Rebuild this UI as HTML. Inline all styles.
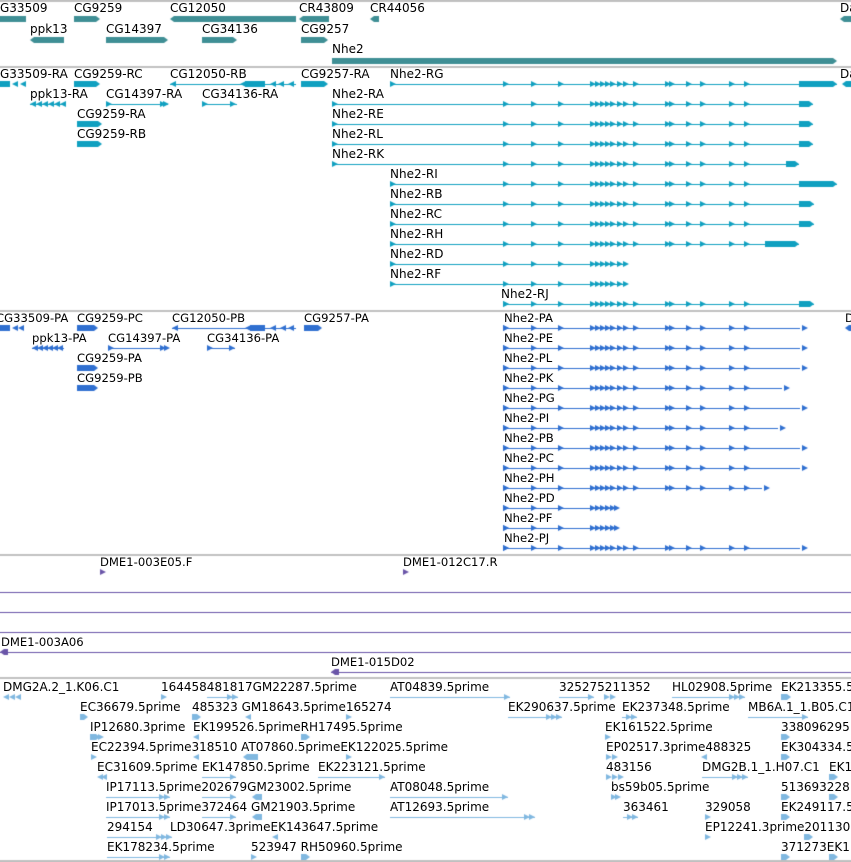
<!DOCTYPE html>
<html><head><meta charset="utf-8"><style>
html,body{margin:0;padding:0;background:#fff;}
#w{position:relative;width:851px;height:862px;overflow:hidden;}
canvas{position:absolute;left:0;top:0;}
.t{position:absolute;font:12px "DejaVu Sans","Liberation Sans",sans-serif;line-height:12px;white-space:nowrap;color:#000;}
.c{font-size:11.6px;}
</style></head><body><div id="w">
<canvas id="cv" width="851" height="862"></canvas>
<div class="t" style="left:0;top:2px">G33509</div>
<div class="t" style="left:74px;top:2px">CG9259</div>
<div class="t" style="left:170px;top:2px">CG12050</div>
<div class="t" style="left:299px;top:2px">CR43809</div>
<div class="t" style="left:370px;top:2px">CR44056</div>
<div class="t" style="left:840px;top:2px">Da</div>
<div class="t" style="left:30px;top:23px">ppk13</div>
<div class="t" style="left:106px;top:23px">CG14397</div>
<div class="t" style="left:202px;top:23px">CG34136</div>
<div class="t" style="left:301px;top:23px">CG9257</div>
<div class="t" style="left:332px;top:43px">Nhe2</div>
<div class="t" style="left:0;top:68px">G33509-RA</div>
<div class="t" style="left:74px;top:68px">CG9259-RC</div>
<div class="t" style="left:170px;top:68px">CG12050-RB</div>
<div class="t" style="left:301px;top:68px">CG9257-RA</div>
<div class="t" style="left:390px;top:68px">Nhe2-RG</div>
<div class="t" style="left:840px;top:68px">Da</div>
<div class="t" style="left:30px;top:88px">ppk13-RA</div>
<div class="t" style="left:106px;top:88px">CG14397-RA</div>
<div class="t" style="left:202px;top:88px">CG34136-RA</div>
<div class="t" style="left:332px;top:88px">Nhe2-RA</div>
<div class="t" style="left:77px;top:108px">CG9259-RA</div>
<div class="t" style="left:332px;top:108px">Nhe2-RE</div>
<div class="t" style="left:77px;top:128px">CG9259-RB</div>
<div class="t" style="left:332px;top:128px">Nhe2-RL</div>
<div class="t" style="left:332px;top:148px">Nhe2-RK</div>
<div class="t" style="left:390px;top:168px">Nhe2-RI</div>
<div class="t" style="left:390px;top:188px">Nhe2-RB</div>
<div class="t" style="left:390px;top:208px">Nhe2-RC</div>
<div class="t" style="left:390px;top:228px">Nhe2-RH</div>
<div class="t" style="left:390px;top:248px">Nhe2-RD</div>
<div class="t" style="left:390px;top:268px">Nhe2-RF</div>
<div class="t" style="left:501px;top:288px">Nhe2-RJ</div>
<div class="t c" style="left:-4px;top:312px">CG33509-PA</div>
<div class="t c" style="left:77px;top:312px">CG9259-PC</div>
<div class="t c" style="left:172px;top:312px">CG12050-PB</div>
<div class="t c" style="left:304px;top:312px">CG9257-PA</div>
<div class="t c" style="left:504px;top:312px">Nhe2-PA</div>
<div class="t c" style="left:845px;top:312px">D</div>
<div class="t c" style="left:32px;top:332px">ppk13-PA</div>
<div class="t c" style="left:108px;top:332px">CG14397-PA</div>
<div class="t c" style="left:207px;top:332px">CG34136-PA</div>
<div class="t c" style="left:504px;top:332px">Nhe2-PE</div>
<div class="t c" style="left:77px;top:352px">CG9259-PA</div>
<div class="t c" style="left:504px;top:352px">Nhe2-PL</div>
<div class="t c" style="left:77px;top:372px">CG9259-PB</div>
<div class="t c" style="left:504px;top:372px">Nhe2-PK</div>
<div class="t c" style="left:504px;top:392px">Nhe2-PG</div>
<div class="t c" style="left:504px;top:412px">Nhe2-PI</div>
<div class="t c" style="left:504px;top:432px">Nhe2-PB</div>
<div class="t c" style="left:504px;top:452px">Nhe2-PC</div>
<div class="t c" style="left:504px;top:472px">Nhe2-PH</div>
<div class="t c" style="left:504px;top:492px">Nhe2-PD</div>
<div class="t c" style="left:504px;top:512px">Nhe2-PF</div>
<div class="t c" style="left:504px;top:532px">Nhe2-PJ</div>
<div class="t c" style="left:100px;top:556px">DME1-003E05.F</div>
<div class="t c" style="left:403px;top:556px">DME1-012C17.R</div>
<div class="t c" style="left:1px;top:636px">DME1-003A06</div>
<div class="t c" style="left:331px;top:656px">DME1-015D02</div>
<div class="t" style="left:3px;top:681px">DMG2A.2_1.K06.C1</div>
<div class="t" style="left:161px;top:681px">164458481817GM22287.5prime</div>
<div class="t" style="left:390px;top:681px">AT04839.5prime</div>
<div class="t" style="left:559px;top:681px">325275211352</div>
<div class="t" style="left:672px;top:681px">HL02908.5prime</div>
<div class="t" style="left:781px;top:681px">EK213355.5</div>
<div class="t" style="left:80px;top:701px">EC36679.5prime</div>
<div class="t" style="left:192px;top:701px">485323 GM18643.5prime165274</div>
<div class="t" style="left:508px;top:701px">EK290637.5prime</div>
<div class="t" style="left:622px;top:701px">EK237348.5prime</div>
<div class="t" style="left:748px;top:701px">MB6A.1_1.B05.C1</div>
<div class="t" style="left:90px;top:721px">IP12680.3prime</div>
<div class="t" style="left:193px;top:721px">EK199526.5primeRH17495.5prime</div>
<div class="t" style="left:605px;top:721px">EK161522.5prime</div>
<div class="t" style="left:781px;top:721px">338096295</div>
<div class="t" style="left:91px;top:741px">EC22394.5prime318510 AT07860.5primeEK122025.5prime</div>
<div class="t" style="left:606px;top:741px">EP02517.3prime488325</div>
<div class="t" style="left:781px;top:741px">EK304334.5</div>
<div class="t" style="left:97px;top:761px">EC31609.5prime</div>
<div class="t" style="left:202px;top:761px">EK147850.5prime</div>
<div class="t" style="left:318px;top:761px">EK223121.5prime</div>
<div class="t" style="left:606px;top:761px">483156</div>
<div class="t" style="left:702px;top:761px">DMG2B.1_1.H07.C1</div>
<div class="t" style="left:829px;top:761px">EK1</div>
<div class="t" style="left:106px;top:781px">IP17113.5prime202679GM23002.5prime</div>
<div class="t" style="left:390px;top:781px">AT08048.5prime</div>
<div class="t" style="left:611px;top:781px">bs59b05.5prime</div>
<div class="t" style="left:781px;top:781px">513693228</div>
<div class="t" style="left:106px;top:801px">IP17013.5prime372464 GM21903.5prime</div>
<div class="t" style="left:390px;top:801px">AT12693.5prime</div>
<div class="t" style="left:623px;top:801px">363461</div>
<div class="t" style="left:705px;top:801px">329058</div>
<div class="t" style="left:781px;top:801px">EK249117.5</div>
<div class="t" style="left:107px;top:821px">294154</div>
<div class="t" style="left:170px;top:821px">LD30647.3primeEK143647.5prime</div>
<div class="t" style="left:705px;top:821px">EP12241.3prime201130</div>
<div class="t" style="left:107px;top:841px">EK178234.5prime</div>
<div class="t" style="left:251px;top:841px">523947 RH50960.5prime</div>
<div class="t" style="left:781px;top:841px">371273EK1</div>
</div>
<script>
var c=document.getElementById('cv').getContext('2d');
function hl(y,col){c.fillStyle=col||'#c0c0c0';c.fillRect(0,y,851,2);}
function bar(x1,x2,y,h,col,dir){c.fillStyle=col;c.beginPath();var m=y+h/2;
 if(dir>0){c.moveTo(x1,y);c.lineTo(x2-4,y);c.lineTo(x2,m);c.lineTo(x2-4,y+h);c.lineTo(x1,y+h);}
 else if(dir<0){c.moveTo(x2,y);c.lineTo(x1+4,y);c.lineTo(x1,m);c.lineTo(x1+4,y+h);c.lineTo(x2,y+h);}
 else{c.rect(x1,y,x2-x1,h);}
 c.closePath();c.fill();}
function ln(x1,x2,y,col){c.fillStyle=col;c.fillRect(x1,y,x2-x1,1);}
function tri(x,y,col,d){c.fillStyle=col;c.beginPath();if(d>0){c.moveTo(x,y-3);c.lineTo(x+6,y);c.lineTo(x,y+3);}else{c.moveTo(x+6,y-3);c.lineTo(x,y);c.lineTo(x+6,y+3);}c.closePath();c.fill();}
hl(0);hl(66);hl(310);hl(554);
var T='#3f8f95';
bar(0,26,16,6,T,0);bar(74,100,16,6,T,1);bar(170,296,16,6,T,-1);bar(299,329,16,6,T,-1);bar(370,379,16,6,T,-1);bar(840,851,16,6,T,-1);
bar(30,64,37,6,T,-1);bar(106,168,37,6,T,1);bar(202,237,37,6,T,1);bar(301,328,37,6,T,1);
bar(332,837,58,6,T,1);
var B='#10a0c0';
var ex=[503,531,558,590,595,600,605,610,617,623,633,665,669,686,700,729,744];
function nhe(x0,y,col,lim,end){ln(x0,end?end[1]:lim,y,col);tri(x0,y,col,1);
 for(var i=0;i<ex.length;i++){if(ex[i]<=lim)tri(ex[i],y,col,1);}
 if(end)bar(end[0],end[1],y-3,6,col,1);}
bar(0,10,81,6,B,0);tri(12,84,B,-1);tri(20,84,B,-1);
bar(74,100,81,6,B,1);
ln(170,296,84,B);tri(170,84,B,-1);bar(245,265,81,6,B,0);tri(240,84,B,-1);tri(270,84,B,-1);tri(278,84,B,-1);tri(288,84,B,-1);
bar(301,328,81,6,B,1);
nhe(390,84,B,750,[799,837]);bar(842,851,81,6,B,-1);
ln(30,64,104,B);for(var x=30;x<62;x+=6)tri(x,104,B,-1);
ln(106,168,104,B);tri(106,104,B,1);tri(160,104,B,1);tri(163,104,B,1);
ln(202,237,104,B);tri(202,104,B,1);tri(230,104,B,1);
nhe(332,104,B,750,[799,813]);
bar(77,102,121,6,B,1);nhe(332,124,B,750,[799,813]);
bar(77,102,141,6,B,1);nhe(332,144,B,750,[799,813]);
nhe(332,164,B,766,[786,799]);
nhe(390,184,B,786,[799,837]);
nhe(390,204,B,750,[799,814]);
nhe(390,224,B,750,[799,814]);
nhe(390,244,B,750,[765,799]);
nhe(390,264,B,623,null);
nhe(390,284,B,623,null);
nhe(503,304,B,750,[799,814]);
var P='#2f6fd0';
bar(0,10,325,6,P,0);tri(12,328,P,-1);tri(18,328,P,-1);
bar(77,98,325,6,P,1);
ln(172,296,328,P);tri(172,328,P,-1);bar(250,265,325,6,P,0);tri(245,328,P,-1);tri(270,328,P,-1);tri(280,328,P,-1);tri(288,328,P,-1);
bar(304,322,325,6,P,1);bar(845,851,325,6,P,-1);
ln(32,64,348,P);for(var x=32;x<62;x+=5)tri(x,348,P,-1);
ln(108,168,348,P);tri(108,348,P,1);tri(160,348,P,1);tri(164,348,P,1);
ln(207,235,348,P);tri(207,348,P,1);tri(229,348,P,1);
bar(77,98,365,6,P,1);bar(77,98,385,6,P,1);
var py=[328,348,368,388,408,428,448,468,488,508,528,548];
var pe=[808,808,808,790,808,786,808,808,770,620,620,808];
for(var i=0;i<py.length;i++){nhe(503,py[i],P,pe[i]-8,null);tri(pe[i]-6,py[i],P,1);}
var D='#6a55a8';
tri(100,572,D,1);tri(403,572,D,1);
ln(0,851,592,D);ln(0,851,612,D);ln(0,851,632,D);
ln(0,851,652,D);bar(0,8,649,6,D,-1);
ln(331,851,672,D);bar(331,339,669,6,D,-1);
hl(677);hl(860);
var E='#80b8e0';
function e(x1,x2,y,d,n){ln(x1,x2,y,E);var k=n||1;for(var i=0;i<k;i++)tri(d>0?x2-6-i*5:x1+i*5,y,E,d);}
var y0=697;
tri(3,y0,E,-1);tri(9,y0,E,-1);tri(15,y0,E,-1);tri(161,y0,E,1);e(207,238,y0,1,2);e(390,510,y0,1);e(559,594,y0,1);tri(604,y0,E,1);tri(610,y0,E,1);e(672,745,y0,1,3);bar(781,791,y0-3,6,E,1);
y0=717;bar(80,88,y0-3,6,E,1);bar(192,201,y0-3,6,E,1);tri(245,y0,E,-1);tri(346,y0,E,1);e(508,562,y0,1,3);e(622,637,y0,1,2);e(748,808,y0,1);
y0=737;bar(90,100,y0-3,6,E,1);tri(98,y0,E,1);tri(193,y0,E,-1);bar(301,310,y0-3,6,E,1);tri(605,y0,E,1);bar(781,790,y0-3,6,E,1);
y0=757;tri(91,y0,E,1);tri(193,y0,E,-1);bar(243,258,y0-3,6,E,-1);tri(346,y0,E,1);tri(606,y0,E,1);tri(612,y0,E,1);tri(701,y0,E,-1);bar(781,790,y0-3,6,E,1);
y0=777;tri(97,y0,E,-1);tri(101,y0,E,-1);e(202,236,y0,1);e(318,385,y0,1);tri(606,y0,E,1);tri(612,y0,E,1);tri(618,y0,E,1);e(702,748,y0,1,3);bar(829,838,y0-3,6,E,1);
y0=797;e(106,170,y0,1,2);e(202,236,y0,1);bar(252,262,y0-3,6,E,-1);e(390,508,y0,1);tri(611,y0,E,1);tri(615,y0,E,1);bar(781,790,y0-3,6,E,1);bar(829,838,y0-3,6,E,1);
y0=817;e(106,170,y0,1,2);e(202,236,y0,1);bar(252,262,y0-3,6,E,-1);e(390,535,y0,1,2);e(623,638,y0,1,2);tri(705,y0,E,1);bar(781,790,y0-3,6,E,1);
y0=837;e(107,172,y0,1,3);tri(272,y0,E,-1);tri(705,y0,E,1);bar(804,813,y0-3,6,E,1);
y0=857;e(107,170,y0,1,2);tri(251,y0,E,1);bar(301,310,y0-3,6,E,1);bar(781,790,y0-3,6,E,1);bar(829,838,y0-3,6,E,1);
</script>
</body></html>
